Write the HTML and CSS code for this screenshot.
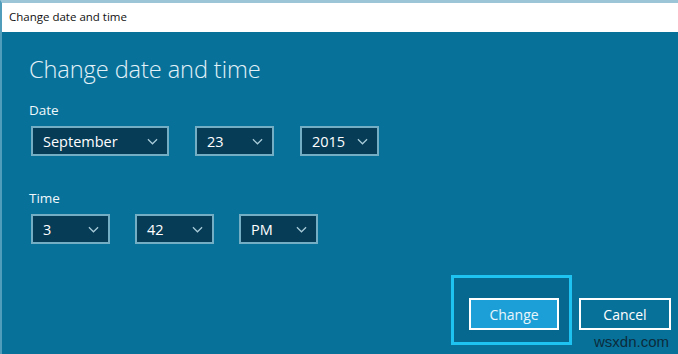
FILE: index.html
```html
<!DOCTYPE html>
<html lang="en">
<head>
    <meta charset="UTF-8">
    <title>Change date and time</title>
    <link rel="stylesheet" href="styles.css">
</head>
<body>
    <div class="window">
        <div class="titlebar">Change date and time</div>

        <div class="dialog">
            <h1>Change date and time</h1>

            <div class="label">Date</div>
            <div class="row">
                <div class="combo w-month"><span>September</span>
                    <svg viewBox="0 0 12 7"><path d="M1 1l5 5 5-5"/></svg></div>
                <div class="combo w-small"><span>23</span>
                    <svg viewBox="0 0 12 7"><path d="M1 1l5 5 5-5"/></svg></div>
                <div class="combo w-small"><span>2015</span>
                    <svg viewBox="0 0 12 7"><path d="M1 1l5 5 5-5"/></svg></div>
            </div>

            <div class="label time">Time</div>
            <div class="row tight">
                <div class="combo w-small"><span>3</span>
                    <svg viewBox="0 0 12 7"><path d="M1 1l5 5 5-5"/></svg></div>
                <div class="combo w-small"><span>42</span>
                    <svg viewBox="0 0 12 7"><path d="M1 1l5 5 5-5"/></svg></div>
                <div class="combo w-small"><span>PM</span>
                    <svg viewBox="0 0 12 7"><path d="M1 1l5 5 5-5"/></svg></div>
            </div>

            <!-- buttons -->
            <div class="footer">
                <div class="focus-ring">
                    <button class="btn primary">Change</button>
                </div>
                <div class="cancel-col">
                    <button class="btn">Cancel</button>
                    <div class="watermark">wsxdn.com</div>
                </div>
            </div>
        </div>
    </div>
</body>
</html>
```

FILE: styles.css
```css
/* Global styles */
body {
    margin: 0;
    font-family: 'Open Sans', 'Noto Sans', sans-serif;
    background-color: #08719a;
    overflow: hidden;
}

.window {
    width: 678px;
    height: 354px;
    border-top: 3px solid #9cc5d8;
    border-left: 2px solid #4f9dbb;
    box-sizing: border-box;
    display: flex;
    flex-direction: column;
}

.titlebar {
    background-color: #ffffff;
    height: 29px;
    line-height: 28px;
    padding-left: 7px;
    font-size: 11.5px;
    color: #111;
}

.dialog {
    flex: 1;
    padding: 22px 0 0 27px;
    display: flex;
    flex-direction: column;
}

h1 {
    margin: 0;
    font-weight: 300;
    font-size: 23.6px;
    line-height: 30px;
    color: #e3f2f8;
    letter-spacing: -0.1px;
}

.label {
    margin-top: 17px;
    font-size: 13.5px;
    line-height: 18px;
    color: #f0f8fb;
}

.label.time {
    margin-top: 33px;
}

.row {
    display: flex;
    gap: 26px;
    margin-top: 7px;
    padding-left: 2px;
}

.row.tight {
    gap: 25px;
    margin-top: 7px;
}

/* Combo boxes */
.combo {
    height: 30px;
    box-sizing: border-box;
    border: 2px solid #74aec4;
    background-color: #073c57;
    display: flex;
    align-items: center;
    justify-content: space-between;
    padding: 0 9px 0 10px;
    color: #ffffff;
    font-size: 14.5px;
}

.combo svg {
    width: 11px;
    height: 7px;
    fill: none;
    stroke: #a9ccd9;
    stroke-width: 1.3;
}

.w-month {
    width: 138px;
}

.w-small {
    width: 79px;
}

/* Buttons */
.footer {
    margin-top: auto;
    display: flex;
    justify-content: flex-end;
    align-items: flex-start;
    padding-right: 7px;
    height: 79px;
}

.focus-ring {
    border: 3px solid #1ec3f2;
    background-color: #06688f;
    padding: 20px 10px 12px 15px;
    height: 32px;
    margin-right: 7px;
}

.btn {
    height: 32px;
    box-sizing: border-box;
    border: 2px solid #ffffff;
    background-color: #08719a;
    color: #ffffff;
    font-family: 'Open Sans', 'Noto Sans', sans-serif;
    font-size: 14px;
    padding: 0;
    width: 92px;
}

.btn.primary {
    background-color: #1c9fd6;
    color: #e8f6fc;
    width: 90px;
}

.cancel-col {
    padding-top: 23px;
    display: flex;
    flex-direction: column;
    align-items: flex-end;
}

.watermark {
    margin-top: 3px;
    padding-right: 2px;
    font-family: 'Liberation Sans', sans-serif;
    font-size: 15px;
    line-height: 17px;
    color: #0b2c3c;
}
```
